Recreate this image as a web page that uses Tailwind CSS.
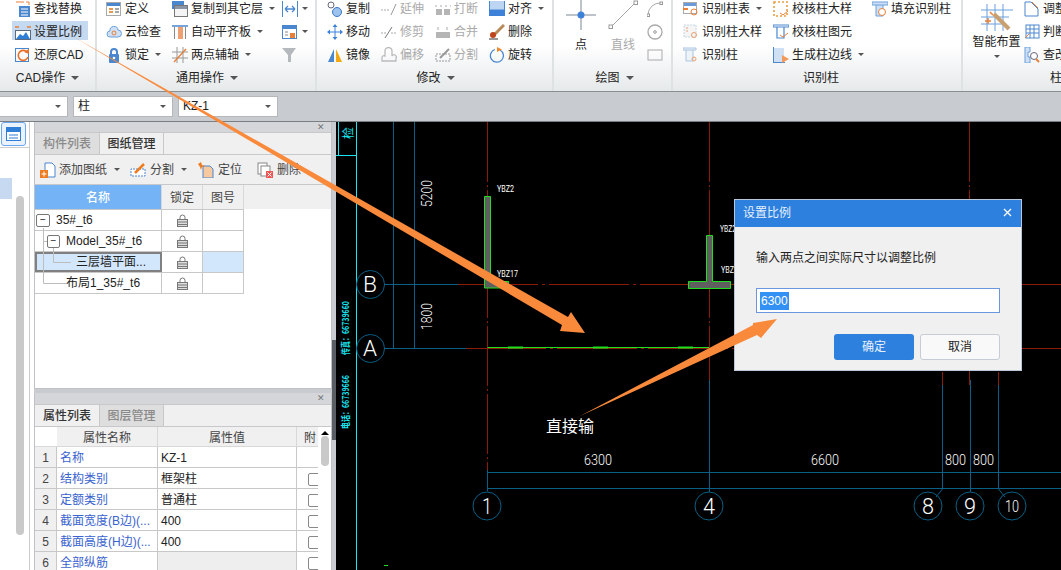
<!DOCTYPE html>
<html lang="zh">
<head>
<meta charset="utf-8">
<script src="https://cdn.jsdelivr.net/npm/@tailwindcss/browser@4"></script>
<title>设置比例</title>
</head>
<body class="m-0 w-[1061px] h-[570px] overflow-hidden relative bg-[#c8cbcf] text-[12px] leading-none text-[#222] font-['Liberation_Sans','Noto_Sans_CJK_SC',sans-serif]">

<!-- Ribbon -->
<div class="h-[91px] flex overflow-hidden bg-gradient-to-b from-white from-50% to-[#e6e9ea] border-b border-[#8b8d90] box-content">
  <!-- CAD -->
  <div class="w-[97px] shrink-0 flex flex-col border-r-2 border-[#dfe2e3]">
    <div class="h-[69px] -mt-[3px] pl-[15px] shrink-0">
      <div class="h-[23px] flex items-center gap-[3px]"><svg class="w-4 h-4 shrink-0" viewBox="0 0 16 16"><path d="M1 1h8M11 1h3v3" stroke="#e8803a" fill="none"/><rect x="4" y="5" width="11" height="11" fill="#4a87cf"/><path d="M6 8h7M6 11h7M6 14h7" stroke="#fff"/></svg><span>查找替换</span></div>
      <div class="h-[23px] flex items-center gap-[3px] relative"><div class="absolute -left-[3px] w-[76px] top-[1px] h-[19px] bg-[#c5d9f1]"></div><svg class="w-4 h-4 shrink-0 relative" viewBox="0 0 16 16"><path d="M0 3h4M12 3h4" stroke="#e8803a" stroke-width="1.5"/><rect x="0.5" y="6.5" width="15" height="9" fill="#fff" stroke="#5b6a7c"/><path d="M1 15l4-5 3 2 3-4 4 7z" fill="#2f7fd6"/></svg><span class="relative">设置比例</span></div>
      <div class="h-[23px] flex items-center gap-[3px]"><svg class="w-4 h-4 shrink-0" viewBox="0 0 16 16"><rect x="0.5" y="1.5" width="13" height="13" fill="none" stroke="#4a87cf"/><path d="M12 5a5 5 0 1 0 1 5" fill="none" stroke="#e8702a" stroke-width="1.6"/><path d="M9 5l5-3v5z" fill="#e8702a"/></svg><span>还原CAD</span></div>
    </div>
    <div class="flex-1 flex items-center justify-center gap-[6px] pb-[1px]"><span>CAD操作</span><span class="w-0 h-0 border-x-[4px] border-x-transparent border-t-[4px] border-t-[#555]"></span></div>
  </div>
  <!-- 通用 -->
  <div class="w-[220px] shrink-0 flex flex-col border-r-2 border-[#dfe2e3]">
    <div class="h-[69px] -mt-[3px] pl-[9px] shrink-0 flex">
      <div class="w-[66px]">
        <div class="h-[23px] flex items-center gap-[3px]"><svg class="w-4 h-4 shrink-0" viewBox="0 0 16 16"><rect x="0.5" y="1.5" width="14" height="13" fill="#fff" stroke="#aaa"/><rect x="1" y="2" width="13" height="3" fill="#4a87cf"/><path d="M3 8h4M3 11h4" stroke="#e69a50" stroke-width="2"/><path d="M9 8h4M9 11h4" stroke="#888" stroke-width="1.5"/></svg><span>定义</span></div>
        <div class="h-[23px] flex items-center gap-[3px]"><svg class="w-4 h-4 shrink-0" viewBox="0 0 16 16"><path d="M4 13a3 3 0 0 1 0-6 4 4 0 0 1 8-1 3.5 3.5 0 0 1 0 7z" fill="#cfe0f5" stroke="#6aa0dc"/><circle cx="8" cy="9" r="2" fill="none" stroke="#e8803a"/></svg><span>云检查</span></div>
        <div class="h-[23px] flex items-center gap-[3px]"><svg class="w-4 h-4 shrink-0" viewBox="0 0 16 16"><path d="M5 8V5a3 3 0 0 1 6 0v3" fill="none" stroke="#4a87cf" stroke-width="2"/><rect x="3" y="7" width="10" height="9" rx="1" fill="#4a87cf"/><circle cx="8" cy="11" r="1.3" fill="#fff"/></svg><span>锁定</span><span class="ml-[3px] w-0 h-0 border-x-[3px] border-x-transparent border-t-[3px] border-t-[#555]"></span></div>
      </div>
      <div class="w-[110px]">
        <div class="h-[23px] flex items-center gap-[3px]"><svg class="w-4 h-4 shrink-0" viewBox="0 0 16 16"><rect x="0" y="0" width="12" height="8" fill="#4a87cf"/><rect x="2.5" y="4.5" width="13" height="11" fill="#f4f4f4" stroke="#777"/><rect x="3" y="5" width="12" height="3" fill="#8a96a6"/></svg><span>复制到其它层</span><span class="ml-[3px] w-0 h-0 border-x-[3px] border-x-transparent border-t-[3px] border-t-[#555]"></span></div>
        <div class="h-[23px] flex items-center gap-[3px]"><svg class="w-4 h-4 shrink-0" viewBox="0 0 16 16"><path d="M0 2h16" stroke="#4a87cf" stroke-width="1.5"/><path d="M2.5 3v12M13.5 3v12" stroke="#888"/><rect x="6" y="3" width="5" height="12" fill="#f0a070"/></svg><span>自动平齐板</span><span class="ml-[3px] w-0 h-0 border-x-[3px] border-x-transparent border-t-[3px] border-t-[#555]"></span></div>
        <div class="h-[23px] flex items-center gap-[3px]"><svg class="w-4 h-4 shrink-0" viewBox="0 0 16 16"><path d="M0 5h16M0 11h16M5 0v16M11 0v16" stroke="#999"/><path d="M2 15L14 2" stroke="#e8803a" stroke-width="1.4"/></svg><span>两点辅轴</span><span class="ml-[3px] w-0 h-0 border-x-[3px] border-x-transparent border-t-[3px] border-t-[#555]"></span></div>
      </div>
      <div>
        <div class="h-[23px] flex items-center gap-[4px]"><svg class="w-4 h-4 shrink-0" viewBox="0 0 16 16"><path d="M0.5 0v16M15.5 0v16" stroke="#4a87cf"/><path d="M3 8h10M3 8l3-3M3 8l3 3M13 8l-3-3M13 8l-3 3" stroke="#4a87cf" fill="none" stroke-width="1.3"/></svg><span class="w-0 h-0 border-x-[3px] border-x-transparent border-t-[3px] border-t-[#555]"></span></div>
        <div class="h-[23px] flex items-center gap-[4px]"><svg class="w-4 h-4 shrink-0" viewBox="0 0 16 16"><rect x="0.5" y="1.5" width="14" height="13" fill="#fff" stroke="#4a87cf"/><rect x="1" y="2" width="13" height="3" fill="#4a87cf"/><rect x="8" y="9" width="5" height="5" fill="#e8803a"/><path d="M3 8h3M3 11h3" stroke="#888"/></svg><span class="w-0 h-0 border-x-[3px] border-x-transparent border-t-[3px] border-t-[#555]"></span></div>
        <div class="h-[23px] flex items-center"><svg class="w-4 h-4 shrink-0" viewBox="0 0 16 16"><path d="M0 1h14L9 8v7H6V8z" fill="#b5b9bd"/></svg></div>
      </div>
    </div>
    <div class="flex-1 flex items-center justify-center gap-[6px] pb-[1px] pl-[2px]"><span>通用操作</span><span class="w-0 h-0 border-x-[4px] border-x-transparent border-t-[4px] border-t-[#555]"></span></div>
  </div>
  <!-- 修改 -->
  <div class="w-[237px] shrink-0 flex flex-col border-r-2 border-[#dfe2e3]">
    <div class="h-[69px] -mt-[3px] pl-[10px] shrink-0 grid grid-cols-[54px_54px_54px_60px] grid-rows-[23px_23px_23px]">
      <div class="flex items-center gap-[3px]"><svg class="w-4 h-4 shrink-0" viewBox="0 0 16 16"><circle cx="4" cy="4" r="3" fill="#fff" stroke="#667"/><circle cx="10" cy="11" r="4.5" fill="#9cc3ee" stroke="#3a78c4"/></svg><span>复制</span></div>
      <div class="flex items-center gap-[3px] text-[#aaa]"><svg class="w-4 h-4 shrink-0" viewBox="0 0 16 16"><path d="M0 9h8" stroke="#aaa" stroke-dasharray="2 1"/><path d="M10 14L15 3" stroke="#999"/></svg><span>延伸</span></div>
      <div class="flex items-center gap-[3px] text-[#aaa]"><svg class="w-4 h-4 shrink-0" viewBox="0 0 16 16"><path d="M0 5h16" stroke="#aaa" stroke-dasharray="2 3"/><rect x="1" y="8" width="6" height="6" fill="#b5b5b5"/><rect x="9" y="8" width="6" height="6" fill="#b5b5b5"/></svg><span>打断</span></div>
      <div class="flex items-center gap-[3px]"><svg class="w-4 h-4 shrink-0" viewBox="0 0 16 16"><rect x="0.5" y="-3" width="15" height="12" fill="#bcd5f3" stroke="#4a87cf"/><rect x="0" y="9" width="16" height="6" fill="#3d82d8"/></svg><span>对齐</span><span class="ml-[3px] w-0 h-0 border-x-[3px] border-x-transparent border-t-[3px] border-t-[#555]"></span></div>

      <div class="flex items-center gap-[3px]"><svg class="w-4 h-4 shrink-0" viewBox="0 0 16 16"><path d="M8 0l2.5 3h-5zM8 16l2.5-3h-5zM0 8l3-2.5v5zM16 8l-3-2.5v5z" fill="#3d82d8"/><path d="M3 8h10M8 3v10" stroke="#3d82d8"/></svg><span>移动</span></div>
      <div class="flex items-center gap-[3px] text-[#aaa]"><svg class="w-4 h-4 shrink-0" viewBox="0 0 16 16"><path d="M0 9h6M10 9h6" stroke="#aaa" stroke-dasharray="2 1"/><path d="M4 14L11 3" stroke="#777"/></svg><span>修剪</span></div>
      <div class="flex items-center gap-[3px] text-[#aaa]"><svg class="w-4 h-4 shrink-0" viewBox="0 0 16 16"><path d="M3 3v3M12 3v3" stroke="#aaa"/><rect x="1" y="8" width="14" height="6" fill="#b5b5b5"/></svg><span>合并</span></div>
      <div class="flex items-center gap-[3px]"><svg class="w-4 h-4 shrink-0" viewBox="0 0 16 16"><path d="M5 11L15 1" stroke="#b88a5a" stroke-width="3"/><circle cx="4" cy="11" r="3" fill="#c0451c"/><path d="M0 15h9" stroke="#333"/></svg><span>删除</span></div>

      <div class="flex items-center gap-[3px]"><svg class="w-4 h-4 shrink-0" viewBox="0 0 16 16"><path d="M7 2v13H1z" fill="#4a87cf"/><path d="M9 2v13h6z" fill="#f3a712"/></svg><span>镜像</span></div>
      <div class="flex items-center gap-[3px] text-[#aaa]"><svg class="w-4 h-4 shrink-0" viewBox="0 0 16 16"><path d="M1 14v-3a2 2 0 0 1 3-2V4a3 3 0 0 1 7 0v5a2 2 0 0 1 4 2v3z" fill="none" stroke="#bbb" stroke-width="1.3"/></svg><span>偏移</span></div>
      <div class="flex items-center gap-[3px] text-[#aaa]"><svg class="w-4 h-4 shrink-0" viewBox="0 0 16 16"><path d="M1 14h14V7H1z" fill="none" stroke="#999" stroke-dasharray="2 1"/><path d="M5 11L14 2" stroke="#999" stroke-width="2"/></svg><span>分割</span></div>
      <div class="flex items-center gap-[3px]"><svg class="w-4 h-4 shrink-0" viewBox="0 0 16 16"><path d="M6 2.5a6.5 6.5 0 1 0 5 .5" fill="none" stroke="#4a87cf" stroke-width="1.3"/><path d="M8 0l5 2.5L8 5z" fill="#ee8a2e"/></svg><span>旋转</span></div>
    </div>
    <div class="flex-1 flex items-center justify-center gap-[6px] pb-[1px] pl-[2px]"><span>修改</span><span class="w-0 h-0 border-x-[4px] border-x-transparent border-t-[4px] border-t-[#555]"></span></div>
  </div>
  <!-- 绘图 -->
  <div class="w-[119px] shrink-0 flex flex-col border-r-2 border-[#dfe2e3]">
    <div class="h-[69px] -mt-[3px] shrink-0 flex">
      <div class="w-[52px] flex flex-col items-center pt-[3px] pl-[1px]">
        <svg class="w-[30px] h-[30px]" viewBox="0 0 30 30"><path d="M0 15h30M15 0v30" stroke="#7a8794"/><circle cx="15" cy="15" r="3.5" fill="#3d82d8"/></svg>
        <span class="mt-[9px] pl-[1px]">点</span>
      </div>
      <div class="w-[34px] flex flex-col items-center pt-[3px] text-[#aaa]">
        <svg class="w-[30px] h-[30px]" viewBox="0 0 30 30"><path d="M3 27L27 3" stroke="#a7a7a7"/><rect x="1" y="25" width="3.5" height="3.5" fill="#fff" stroke="#999"/><rect x="26" y="1" width="3.5" height="3.5" fill="#fff" stroke="#999"/></svg>
        <span class="mt-[9px]">直线</span>
      </div>
      <div class="flex-1 pl-[7px]">
        <div class="h-[23px] flex items-center"><svg class="w-4 h-4" viewBox="0 0 16 16"><path d="M1 14A12 12 0 0 1 14 2" fill="none" stroke="#aaa"/><rect x="0" y="13" width="2.5" height="2.5" fill="#fff" stroke="#999"/><rect x="13" y="1" width="2.5" height="2.5" fill="#fff" stroke="#999"/></svg></div>
        <div class="h-[23px] flex items-center"><svg class="w-4 h-4" viewBox="0 0 16 16"><circle cx="8" cy="8" r="7" fill="none" stroke="#aaa" stroke-width="1.3"/><circle cx="8" cy="8" r="1.3" fill="none" stroke="#999"/></svg></div>
        <div class="h-[23px] flex items-center"><svg class="w-4 h-4" viewBox="0 0 16 16"><rect x="1" y="3" width="14" height="10" fill="none" stroke="#aaa"/></svg></div>
      </div>
    </div>
    <div class="flex-1 flex items-center justify-center gap-[6px] pb-[1px] pl-[4px]"><span>绘图</span><span class="w-0 h-0 border-x-[4px] border-x-transparent border-t-[4px] border-t-[#555]"></span></div>
  </div>
  <!-- 识别柱 -->
  <div class="w-[290px] shrink-0 flex flex-col border-r-2 border-[#dfe2e3]">
    <div class="h-[69px] -mt-[3px] pl-[10px] shrink-0 grid grid-cols-[90px_99px_80px] grid-rows-[23px_23px_23px]">
      <div class="flex items-center gap-[3px]"><svg class="w-4 h-4 shrink-0" viewBox="0 0 16 16"><rect x="0.5" y="1.5" width="13" height="11" fill="#fff" stroke="#aaa"/><rect x="1" y="2" width="12" height="3" fill="#6a9bd8"/><path d="M0 8h5" stroke="#e8803a" stroke-width="2"/><circle cx="11" cy="11" r="3" fill="none" stroke="#e8803a"/></svg><span>识别柱表</span><span class="ml-[3px] w-0 h-0 border-x-[3px] border-x-transparent border-t-[3px] border-t-[#555]"></span></div>
      <div class="flex items-center gap-[3px]"><svg class="w-4 h-4 shrink-0" viewBox="0 0 16 16"><rect x="1" y="1" width="13" height="14" fill="none" stroke="#e8a040" stroke-width="1.6" stroke-dasharray="2 2"/><path d="M7 12l3 2 5-4" fill="none" stroke="#e8803a"/></svg><span>校核柱大样</span></div>
      <div class="flex items-center gap-[3px]"><svg class="w-4 h-4 shrink-0" viewBox="0 0 16 16"><path d="M0 1h16v3H0zM4 4v11h7V4" fill="#cfe0f5" stroke="#6aa0dc"/><circle cx="10" cy="11" r="3.5" fill="#fff" stroke="#e8803a"/></svg><span>填充识别柱</span></div>

      <div class="flex items-center gap-[3px]"><svg class="w-4 h-4 shrink-0" viewBox="0 0 16 16"><rect x="1" y="1" width="12" height="12" fill="#f5f5f5" stroke="#c5d5e5" stroke-dasharray="2 1"/><path d="M3 4h2M3 7h2" stroke="#eba070"/><circle cx="11" cy="11" r="2.5" fill="none" stroke="#eba070"/></svg><span>识别柱大样</span></div>
      <div class="flex items-center gap-[3px]"><svg class="w-4 h-4 shrink-0" viewBox="0 0 16 16"><path d="M0 1h16v2H0zM4 3v11h7V3" fill="none" stroke="#4a87cf" stroke-width="1.2"/><path d="M7 11l3 2 5-4" fill="none" stroke="#e8803a"/></svg><span>校核柱图元</span></div>
      <div></div>

      <div class="flex items-center gap-[3px]"><svg class="w-4 h-4 shrink-0" viewBox="0 0 16 16"><path d="M0 1h13v2H0zM3 3v11h7V3" fill="#eef3f8" stroke="#a9c4e2"/><circle cx="11" cy="12" r="2" fill="none" stroke="#eba070"/></svg><span>识别柱</span></div>
      <div class="flex items-center gap-[3px]"><svg class="w-4 h-4 shrink-0" viewBox="0 0 16 16"><rect x="1" y="1" width="10" height="14" fill="#cfe0f5"/><path d="M0.5 0v16M0 15.500h12" stroke="#4a87cf"/><path d="M9 8l7 4-7 4z" fill="#f39a5a"/></svg><span>生成柱边线</span><span class="ml-[3px] w-0 h-0 border-x-[3px] border-x-transparent border-t-[3px] border-t-[#555]"></span></div>
      <div></div>
    </div>
    <div class="flex-1 flex items-center justify-center pb-[1px] pl-[8px]"><span>识别柱</span></div>
  </div>
  <!-- 智能布置 -->
  <div class="flex-1 flex flex-col">
    <div class="h-[69px] -mt-[3px] shrink-0 flex">
      <div class="w-[61px] flex flex-col items-center pt-[6px] pl-[6px]">
        <svg class="w-[32px] h-[30px] shrink-0" viewBox="0 0 32 30"><path d="M6 1v27M14 1v27M22 1v27M0 7h32M0 14h28M0 21h22" stroke="#6aa0dc"/><path d="M13 11l15 15" stroke="#c9a070" stroke-width="4"/><path d="M9 9l3 3M4 18h6M7 15v6" stroke="#e8803a" stroke-width="1.5"/></svg>
        <span class="mt-[3px] whitespace-nowrap">智能布置</span>
        <span class="mt-[7px] w-0 h-0 border-x-[3px] border-x-transparent border-t-[3px] border-t-[#555]"></span>
      </div>
      <div>
        <div class="h-[23px] flex items-center gap-[3px]"><svg class="w-4 h-4 shrink-0" viewBox="0 0 16 16"><path d="M1 1h6l7 7v7H1z" fill="#fff" stroke="#4a87cf"/><path d="M8 1l6 6" stroke="#e8803a"/></svg><span class="whitespace-nowrap">调整柱</span></div>
        <div class="h-[23px] flex items-center gap-[3px]"><svg class="w-4 h-4 shrink-0" viewBox="0 0 16 16"><rect x="2" y="1" width="13" height="13" fill="#fff" stroke="#4a87cf"/><path d="M6 1v13M10 1v13M2 5h13M2 9h13" stroke="#4a87cf"/><path d="M1 14l4-4" stroke="#e8803a"/></svg><span class="whitespace-nowrap">判断</span></div>
        <div class="h-[23px] flex items-center gap-[3px]"><svg class="w-4 h-4 shrink-0" viewBox="0 0 16 16"><path d="M1 0h5v5H4v5h2v6H1z" fill="#cfe0f5" stroke="#6aa0dc"/><circle cx="10" cy="9" r="3.500" fill="#fff" stroke="#667"/><path d="M12 12l3 3" stroke="#e8803a" stroke-width="2"/></svg><span class="whitespace-nowrap">查改</span></div>
      </div>
    </div>
    <div class="flex-1 flex items-center pl-[87px] pb-[1px]"><span>柱</span></div>
  </div>
</div>

<!-- Combo row -->
<div class="h-[29px] flex items-center gap-[5px] pb-[1px] -ml-[1px] relative">
  <div class="w-[69px] h-[21px] bg-white border border-[#b5b7ba] flex items-center justify-end pr-[6px]"><span class="w-0 h-0 border-x-[3px] border-x-transparent border-t-[3px] border-t-[#555]"></span></div>
  <div class="w-[100px] h-[21px] bg-white border border-[#b5b7ba] flex items-center justify-between px-[4px]"><span>柱</span><span class="mr-[2px] w-0 h-0 border-x-[3px] border-x-transparent border-t-[3px] border-t-[#555]"></span></div>
  <div class="w-[100px] h-[21px] bg-white border border-[#b5b7ba] flex items-center justify-between px-[4px]"><span>KZ-1</span><span class="mr-[2px] w-0 h-0 border-x-[3px] border-x-transparent border-t-[3px] border-t-[#555]"></span></div>
</div>
<div class="h-[1px] bg-[#7b7e82]"></div>

<!-- Main -->
<div class="h-[448px] flex">
  <!-- Side strip -->
  <div class="w-[34px] shrink-0 bg-white">
    <div class="w-[30px] h-full border-r border-[#ccc] flex flex-col">
      <div class="h-[26px] border-b border-[#ccc] pl-[1px]">
        <div class="w-[25px] h-[24px] rounded-[3px] border border-[#6aa7ef] bg-[#eaf3fd] flex items-center justify-center">
          <svg class="w-[15px] h-[14px]" viewBox="0 0 15 14"><rect x="0.5" y="0.5" width="14" height="13" fill="#fff" stroke="#2f7fd6"/><rect x="1" y="1" width="13" height="4" fill="#2f7fd6"/><path d="M3 8h9M3 11h9" stroke="#2f7fd6"/></svg>
        </div>
      </div>
      <div class="flex flex-1 min-h-0">
        <div class="w-[12px] h-[21px] mt-[30px] bg-[#c7d9f0]"></div>
        <div class="w-[8px] ml-[4px] mt-[48px] h-[339px] rounded-full bg-[#c9c9c9]"></div>
      </div>
    </div>
  </div>
  <!-- Panels -->
  <div class="w-[298px] shrink-0 flex flex-col">
    <div class="h-[267px] flex flex-col border-x border-b border-[#bfc1c4] bg-white">
      <div class="h-[10px] bg-[#d5d6da] flex items-center justify-end pr-[6px] text-[9px] text-[#777]">✕</div>
      <div class="h-[23px] flex bg-[#f0f0f0] border-b border-t border-[#c6c8ca] font-medium">
        <div class="w-[65px] bg-[#dedede] border-r border-[#c6c8ca] flex items-center justify-center text-[#8a8a8a]">构件列表</div>
        <div class="w-[64px] border-r border-[#c6c8ca] flex items-center justify-center text-[#333]">图纸管理</div>
      </div>
      <div class="h-[30px] flex items-center bg-[#f0f0f0] border-b border-[#c6c8ca] text-[#444] pl-[5px]">
        <svg class="w-4 h-4 shrink-0" viewBox="0 0 16 16"><path d="M5 1h7l3 3v11H5z" fill="#fff" stroke="#4a87cf"/><rect x="0" y="8" width="8" height="8" fill="#ee7d22"/><path d="M4 9.500v5M1.500 12h5" stroke="#fff"/></svg>
        <span class="ml-[3px]">添加图纸</span><span class="ml-[7px] w-0 h-0 border-x-[3px] border-x-transparent border-t-[3px] border-t-[#555]"></span>
        <svg class="w-[16px] h-4 shrink-0 ml-[10px]" viewBox="0 0 16 16"><path d="M1 14V7h14v7z" fill="#fff" stroke="#4a87cf" stroke-dasharray="2 1"/><path d="M5 11l9-9" stroke="#ee7d22" stroke-width="2.500"/></svg>
        <span class="ml-[4px]">分割</span><span class="ml-[7px] w-0 h-0 border-x-[3px] border-x-transparent border-t-[3px] border-t-[#555]"></span>
        <svg class="w-4 h-4 shrink-0 ml-[11px]" viewBox="0 0 16 16"><path d="M5 4h7l3 3v9H5z" fill="#f7c9a0" stroke="#4a87cf"/><path d="M0 2l3-2 1 3 3 1-3 1-1 3-1-3z" fill="#ee7d22"/></svg>
        <span class="ml-[4px]">定位</span>
        <svg class="w-4 h-4 shrink-0 ml-[15px]" viewBox="0 0 16 16"><rect x="1" y="1" width="9" height="11" fill="#fff" stroke="#888"/><rect x="4" y="4" width="9" height="10" fill="#fff" stroke="#888"/><rect x="9" y="9" width="7" height="7" fill="#e55"/><path d="M10.500 10.500l4 4M14.500 10.500l-4 4" stroke="#fff"/></svg>
        <span class="ml-[4px]">删除</span>
      </div>
      <div class="h-[24px] flex bg-[#f0f0f0] [&>div]:pt-[2px]">
        <div class="w-[127px] bg-[#74b3f5] text-white font-medium border-r border-[#d8d8d8] flex items-center justify-center">名称</div>
        <div class="w-[41px] border-r border-[#d8d8d8] flex items-center justify-center text-[#444]">锁定</div>
        <div class="w-[41px] border-r border-[#d8d8d8] flex items-center justify-center text-[#444]">图号</div>
      </div>
      <div class="w-[209px] text-[#222] relative">
        <div class="h-[22px] flex border-y border-[#c8c8c8]">
          <div class="w-[127px] border-r border-[#c8c8c8] flex items-center pl-[1px] gap-[6px]"><span class="w-[14px] h-[13px] rounded-[2px] border border-[#777] flex items-center justify-center text-[10px] bg-white">−</span><span>35#_t6</span></div>
          <div class="w-[41px] border-r border-[#c8c8c8] flex items-center justify-center"><svg class="w-[11px] h-[13px]" viewBox="0 0 11 13"><path d="M3 6V3.500a2.500 2.500 0 0 1 5 0V6" fill="none" stroke="#777"/><rect x="0.500" y="5.500" width="10" height="7" fill="#ddd" stroke="#777"/><path d="M1 8h9M1 10.500h9" stroke="#777"/></svg></div>
          <div class="w-[41px] border-r border-[#c8c8c8]"></div>
        </div>
        <div class="h-[21px] flex border-b border-[#c8c8c8]">
          <div class="w-[127px] border-r border-[#c8c8c8] flex items-center pl-[12px] gap-[6px]"><span class="w-[13px] h-[13px] rounded-[2px] border border-[#777] flex items-center justify-center text-[10px] bg-white">−</span><span>Model_35#_t6</span></div>
          <div class="w-[41px] border-r border-[#c8c8c8] flex items-center justify-center"><svg class="w-[11px] h-[13px]" viewBox="0 0 11 13"><path d="M3 6V3.500a2.500 2.500 0 0 1 5 0V6" fill="none" stroke="#777"/><rect x="0.500" y="5.500" width="10" height="7" fill="#ddd" stroke="#777"/><path d="M1 8h9M1 10.500h9" stroke="#777"/></svg></div>
          <div class="w-[41px] border-r border-[#c8c8c8]"></div>
        </div>
        <div class="h-[21px] flex border-b border-[#c8c8c8]">
          <div class="w-[127px] bg-[#d2e7fc] border-2 border-[#808080] flex items-center pl-[39px]"><span>三层墙平面...</span></div>
          <div class="w-[41px] border-r border-[#c8c8c8] flex items-center justify-center"><svg class="w-[11px] h-[13px]" viewBox="0 0 11 13"><path d="M3 6V3.500a2.500 2.500 0 0 1 5 0V6" fill="none" stroke="#777"/><rect x="0.500" y="5.500" width="10" height="7" fill="#ddd" stroke="#777"/><path d="M1 8h9M1 10.500h9" stroke="#777"/></svg></div>
          <div class="w-[41px] border-r border-[#c8c8c8] bg-[#d2e7fc]"></div>
        </div>
        <div class="h-[21px] flex border-b border-[#c8c8c8]">
          <div class="w-[127px] border-r border-[#c8c8c8] flex items-center pl-[31px]"><span>布局1_35#_t6</span></div>
          <div class="w-[41px] border-r border-[#c8c8c8] flex items-center justify-center"><svg class="w-[11px] h-[13px]" viewBox="0 0 11 13"><path d="M3 6V3.500a2.500 2.500 0 0 1 5 0V6" fill="none" stroke="#777"/><rect x="0.500" y="5.500" width="10" height="7" fill="#ddd" stroke="#777"/><path d="M1 8h9M1 10.500h9" stroke="#777"/></svg></div>
          <div class="w-[41px] border-r border-[#c8c8c8]"></div>
        </div>
        <!-- tree connector lines, drawn over the rows -->
        <svg class="absolute left-0 top-0 w-[127px] h-[85px] pointer-events-none" viewBox="35 209 127 85" fill="none"><path d="M43.500 228V283.500H66M43.500 241.500H47M53.500 248V262.500H71" stroke="#bdbdbd"/></svg>
      </div>
    </div>
    <div class="h-[4px] shrink-0"></div>
    <div class="flex-1 min-h-0 flex flex-col border-x border-[#bfc1c4] bg-white overflow-hidden">
      <div class="h-[11px] shrink-0 bg-[#d5d6da] flex items-center justify-end pr-[6px] text-[9px] text-[#777]">✕</div>
      <div class="h-[23px] shrink-0 flex bg-[#f0f0f0] border-b border-t border-[#c6c8ca] font-medium">
        <div class="w-[65px] border-r border-[#c6c8ca] flex items-center justify-center text-[#333]">属性列表</div>
        <div class="w-[64px] bg-[#dedede] border-r border-[#c6c8ca] flex items-center justify-center text-[#8a8a8a]">图层管理</div>
      </div>
      <div class="flex flex-1 min-h-0">
        <div class="w-[283px] shrink-0 overflow-hidden text-[#222] [&>div>div]:pt-[2px]">
          <div class="h-[20px] flex bg-[#f0f0f0] border-b border-[#d8d8d8] text-[#444]">
            <div class="w-[22px] bg-white"></div>
            <div class="w-[101px] border-r border-[#d8d8d8] flex items-center justify-center">属性名称</div>
            <div class="w-[139px] border-r border-[#d8d8d8] flex items-center justify-center">属性值</div>
            <div class="w-[21px] flex items-center pl-[7px] whitespace-nowrap overflow-hidden">附</div>
          </div>
          <div class="h-[21px] flex border-b border-[#c8c8c8]">
            <div class="w-[22px] bg-[#f0f0f0] border-r border-[#c8c8c8] flex items-center justify-center text-[#444]">1</div>
            <div class="w-[101px] border-r border-[#c8c8c8] flex items-center pl-[3px] text-[#3a63cf]">名称</div>
            <div class="w-[139px] border-r border-[#c8c8c8] flex items-center pl-[3px]">KZ-1</div>
            <div class="w-[21px]"></div>
          </div>
          <div class="h-[21px] flex border-b border-[#c8c8c8]">
            <div class="w-[22px] bg-[#f0f0f0] border-r border-[#c8c8c8] flex items-center justify-center text-[#444]">2</div>
            <div class="w-[101px] border-r border-[#c8c8c8] flex items-center pl-[3px] text-[#3a63cf]">结构类别</div>
            <div class="w-[139px] border-r border-[#c8c8c8] flex items-center pl-[3px]">框架柱</div>
            <div class="w-[21px] flex items-center pl-[11px]"><span class="w-[13px] h-[13px] shrink-0 rounded-[2px] border border-[#888]"></span></div>
          </div>
          <div class="h-[21px] flex border-b border-[#c8c8c8]">
            <div class="w-[22px] bg-[#f0f0f0] border-r border-[#c8c8c8] flex items-center justify-center text-[#444]">3</div>
            <div class="w-[101px] border-r border-[#c8c8c8] flex items-center pl-[3px] text-[#3a63cf]">定额类别</div>
            <div class="w-[139px] border-r border-[#c8c8c8] flex items-center pl-[3px]">普通柱</div>
            <div class="w-[21px] flex items-center pl-[11px]"><span class="w-[13px] h-[13px] shrink-0 rounded-[2px] border border-[#888]"></span></div>
          </div>
          <div class="h-[21px] flex border-b border-[#c8c8c8]">
            <div class="w-[22px] bg-[#f0f0f0] border-r border-[#c8c8c8] flex items-center justify-center text-[#444]">4</div>
            <div class="w-[101px] border-r border-[#c8c8c8] flex items-center pl-[3px] text-[#3a63cf] whitespace-nowrap">截面宽度(B边)(...</div>
            <div class="w-[139px] border-r border-[#c8c8c8] flex items-center pl-[3px]">400</div>
            <div class="w-[21px] flex items-center pl-[11px]"><span class="w-[13px] h-[13px] shrink-0 rounded-[2px] border border-[#888]"></span></div>
          </div>
          <div class="h-[21px] flex border-b border-[#c8c8c8]">
            <div class="w-[22px] bg-[#f0f0f0] border-r border-[#c8c8c8] flex items-center justify-center text-[#444]">5</div>
            <div class="w-[101px] border-r border-[#c8c8c8] flex items-center pl-[3px] text-[#3a63cf] whitespace-nowrap">截面高度(H边)(...</div>
            <div class="w-[139px] border-r border-[#c8c8c8] flex items-center pl-[3px]">400</div>
            <div class="w-[21px] flex items-center pl-[11px]"><span class="w-[13px] h-[13px] shrink-0 rounded-[2px] border border-[#888]"></span></div>
          </div>
          <div class="h-[21px] flex border-b border-[#c8c8c8]">
            <div class="w-[22px] bg-[#f0f0f0] border-r border-[#c8c8c8] flex items-center justify-center text-[#444]">6</div>
            <div class="w-[101px] border-r border-[#c8c8c8] flex items-center pl-[3px] text-[#3a63cf]">全部纵筋</div>
            <div class="w-[139px] border-r border-[#c8c8c8] bg-[#eee]"></div>
            <div class="w-[21px] flex items-center pl-[11px]"><span class="w-[13px] h-[13px] shrink-0 rounded-[2px] border border-[#888]"></span></div>
          </div>
        </div>
        <div class="flex-1 flex flex-col items-center bg-white pt-[4px]">
          <span class="w-0 h-0 border-x-[4px] border-x-transparent border-b-[4px] border-b-black"></span>
          <div class="w-[8px] h-[30px] mt-[1px] rounded-full bg-[#c9c9c9]"></div>
        </div>
      </div>
    </div>
  </div>
  <!-- Splitter -->
  <div class="w-[4px] shrink-0">
    <div class="h-[100px] mt-[218px] bg-[#5a5f66]"></div>
  </div>
  <!-- Canvas: free CAD drawing -->
  <div class="flex-1 bg-black min-w-0">
    <svg class="block w-[725px] h-[448px]" viewBox="336 122 725 448" fill="none">
      <!-- frame -->
      <path d="M356.500 122V570M338.500 122V155M336 155.500H356" stroke="#19e6f0"/>
      <text x="0" y="0" transform="translate(353 139) rotate(-90)" fill="#19e6f0" font-size="12" font-family="Noto Sans CJK SC">检</text>
      <text x="0" y="0" transform="translate(349 355) rotate(-90)" fill="#19e6f0" font-size="9" textLength="54" lengthAdjust="spacingAndGlyphs" font-family="Noto Sans CJK SC" font-weight="700">传真：66739660</text>
      <text x="0" y="0" transform="translate(349 429) rotate(-90)" fill="#19e6f0" font-size="9" textLength="54" lengthAdjust="spacingAndGlyphs" font-family="Noto Sans CJK SC" font-weight="700">电话：66739666</text>
      <!-- blue dims -->
      <path d="M393.500 122V349M414.500 122V349M384 284.500H458M384 348.500H466M487.500 470V491M709.500 380V492M942.500 380V489L936 497M970.500 380V492M998.500 380V489L1005 497M487 472.500H1061M487 488.500H1061" stroke="#0a5f86"/>
      <circle cx="370.500" cy="284.500" r="14" stroke="#0a5f86"/>
      <circle cx="370.500" cy="348.500" r="14" stroke="#0a5f86"/>
      <circle cx="487" cy="506" r="14" stroke="#0a5f86"/>
      <circle cx="709" cy="506" r="14" stroke="#0a5f86"/>
      <circle cx="928" cy="506" r="14" stroke="#0a5f86"/>
      <circle cx="970" cy="506" r="14" stroke="#0a5f86"/>
      <circle cx="1012" cy="506" r="14" stroke="#0a5f86"/>
      <!-- red axes -->
      <path d="M487.500 122V470M709.500 122V380M969.500 122V385M942.500 372V385M998.500 372V385" stroke="#8a1c08" stroke-dasharray="60 3 2 3"/>
      <path d="M458 284.500H1061M466 348.500H1061" stroke="#8a1c08" stroke-dasharray="80 4 3 4"/>
      <!-- walls -->
      <path d="M484.500 196.500H490.500V281.500H508.500V288H484.500Z" fill="#5f5f5f" stroke="#1fe01f"/>
      <path d="M706.500 235.500H712.500V281.500H730.500V288.500H688.500V281.500H706.500Z" fill="#5f5f5f" stroke="#1fe01f"/>
      <path d="M487.500 347.500H709" stroke="#1fe01f"/>
      <path d="M508 347.500H523M593 347.500H608M678 347.500H693" stroke="#1fe01f" stroke-width="2"/>
      <!-- text -->
      <g fill="#fff" font-family="Roboto" font-weight="300">
        <text x="497" y="192" font-size="9" font-weight="400" textLength="17" lengthAdjust="spacingAndGlyphs">YBZ2</text>
        <text x="497" y="277" font-size="9" font-weight="400" textLength="21" lengthAdjust="spacingAndGlyphs">YBZ17</text>
        <text x="720" y="232" font-size="9" font-weight="400" textLength="16" lengthAdjust="spacingAndGlyphs">YBZ2</text>
        <text x="721" y="273" font-size="9" font-weight="400" textLength="13" lengthAdjust="spacingAndGlyphs">YBZ</text>
        <text transform="translate(432 207) rotate(-90)" font-size="15" textLength="27" lengthAdjust="spacingAndGlyphs">5200</text>
        <text transform="translate(432 330) rotate(-90)" font-size="15" textLength="27" lengthAdjust="spacingAndGlyphs">1800</text>
        <text x="584" y="465" font-size="14" textLength="28" lengthAdjust="spacingAndGlyphs">6300</text>
        <text x="811" y="465" font-size="14" textLength="28" lengthAdjust="spacingAndGlyphs">6600</text>
        <text x="945" y="465" font-size="14" textLength="21" lengthAdjust="spacingAndGlyphs">800</text>
        <text x="973" y="465" font-size="14" textLength="21" lengthAdjust="spacingAndGlyphs">800</text>
        <text x="363" y="292" font-size="22" textLength="14" lengthAdjust="spacingAndGlyphs">B</text>
        <text x="363" y="356" font-size="22" textLength="14" lengthAdjust="spacingAndGlyphs">A</text>
        <text x="482" y="514" font-size="22" textLength="10" lengthAdjust="spacingAndGlyphs">1</text>
        <text x="703" y="514" font-size="22" textLength="12" lengthAdjust="spacingAndGlyphs">4</text>
        <text x="922" y="514" font-size="22" textLength="12" lengthAdjust="spacingAndGlyphs">8</text>
        <text x="964" y="514" font-size="22" textLength="12" lengthAdjust="spacingAndGlyphs">9</text>
        <text x="1005" y="512" font-size="16" textLength="14" lengthAdjust="spacingAndGlyphs">10</text>
        <text x="546" y="432" font-size="16" font-family="Noto Sans CJK SC" font-weight="400">直接输</text>
      </g>
      <path d="M384 565.500h4" stroke="#1fe01f"/>
    </svg>
  </div>
</div>

<!-- Dialog -->
<div class="absolute left-[734px] top-[199px] w-[288px] h-[172px] bg-[#f0f0f0] border border-[#b9c7da] flex flex-col">
  <div class="h-[27px] shrink-0 bg-[#2e80df] text-[#e6f0fb] flex items-center justify-between pl-[8px] pr-[9px] pb-[2px]"><span>设置比例</span><svg class="w-[9px] h-[9px]" viewBox="0 0 9 9"><path d="M1 1l7 7M8 1l-7 7" stroke="#fff" stroke-width="1.300"/></svg></div>
  <div class="flex-1 pl-[21px]">
    <div class="mt-[25px] h-[12px] flex items-center">输入两点之间实际尺寸以调整比例</div>
    <div class="mt-[24px] w-[244px] h-[25px] bg-white border border-[#6a97e0] flex items-center pl-[3px]"><span class="bg-[#3390f5] text-white h-[18px] flex items-center text-[12px] px-[1px]">6300</span></div>
    <div class="mt-[21px] w-[244px] flex justify-end gap-[6px]">
      <div class="w-[80px] h-[26px] rounded-[3px] bg-[#2e80df] text-[#e6f0fb] flex items-center justify-center">确定</div>
      <div class="w-[80px] h-[26px] rounded-[3px] bg-[#f9f9f9] border border-[#c5ccd6] flex items-center justify-center">取消</div>
    </div>
  </div>
</div>

<!-- Annotation arrows -->
<svg class="absolute inset-0 w-[1061px] h-[570px] pointer-events-none" viewBox="0 0 1061 570">
  <polygon points="72,36 568,317 571,312 585,333 560,331 562,325" fill="#f98a3c"/>
  <polygon points="580,416 753,325 753,323 777,319 761,338 757,335" fill="#f98a3c"/>
</svg>

</body>
</html>
